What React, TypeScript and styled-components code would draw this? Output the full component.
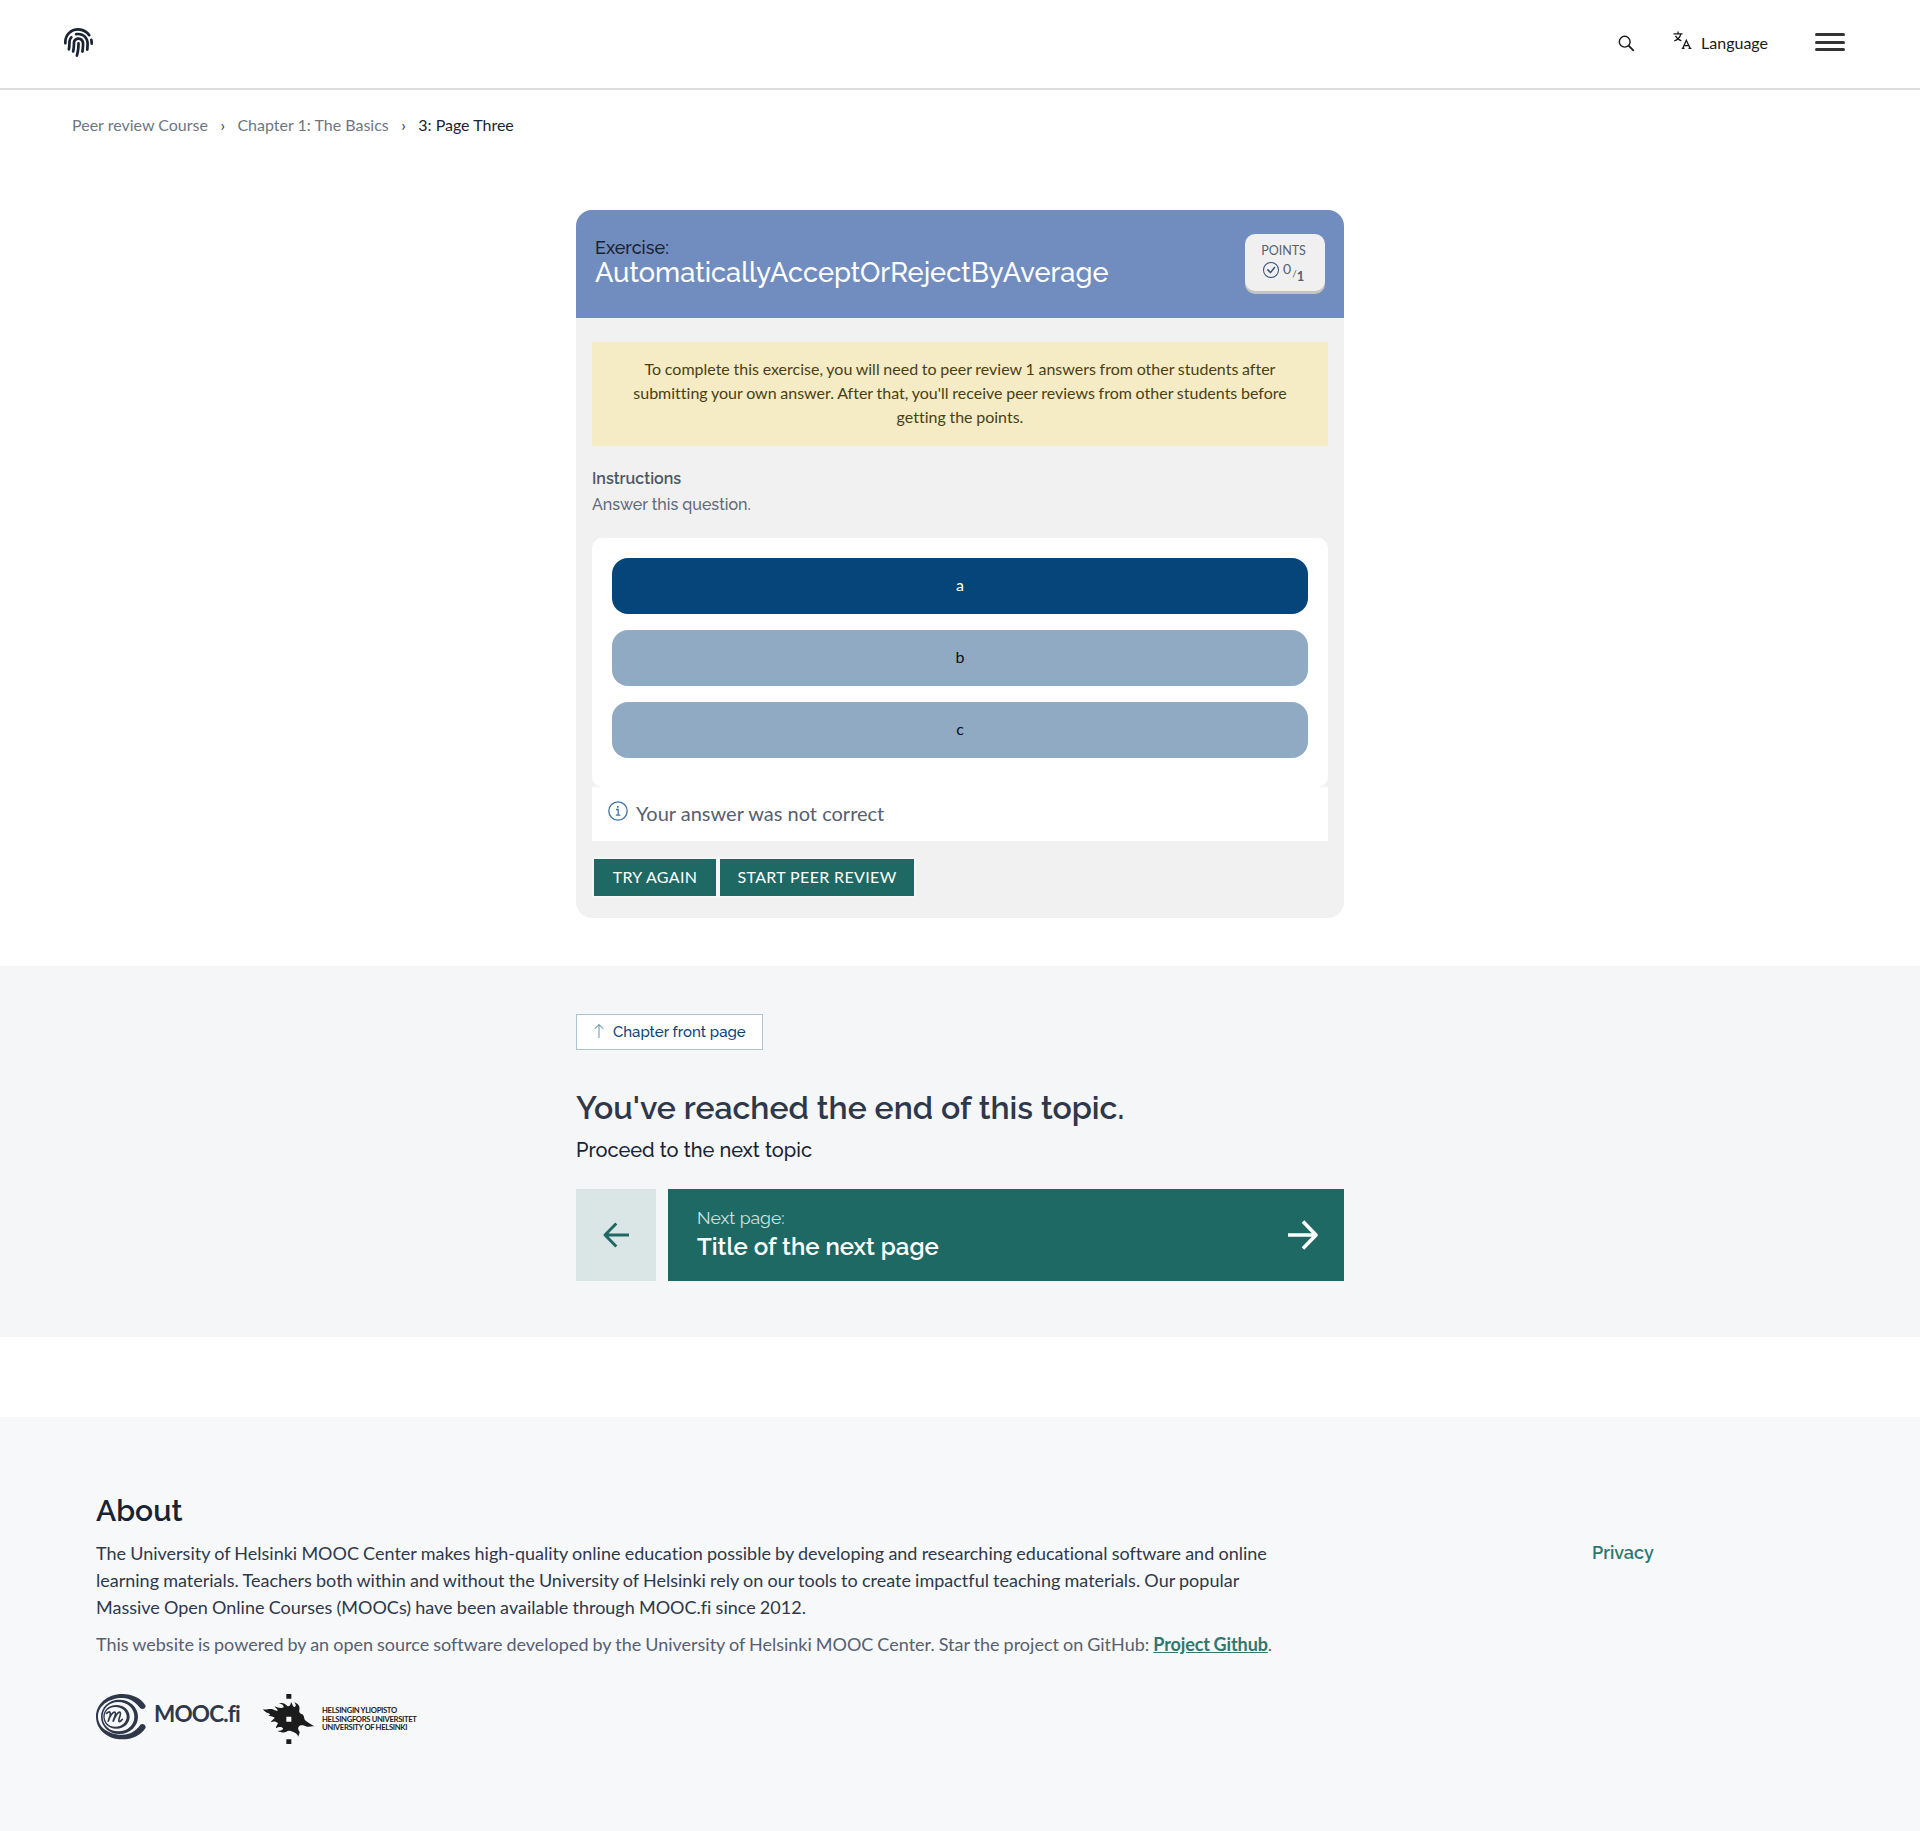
import React from "react";
import styled, { createGlobalStyle } from "styled-components";
import { FaFingerprint } from "react-icons/fa";
import { BsArrowUp, BsCheckCircle } from "react-icons/bs";

const heading = `Raleway, Lato, sans-serif`;
const body = `Lato, sans-serif`;

const Global = createGlobalStyle`
  *, *::before, *::after { box-sizing: border-box; }
  body { margin: 0; background: #fff; font-family: ${body}; font-size: 16px; line-height: 24px; color: #1a2333; font-variant-ligatures: none; }
  p, h1, h2, h3 { margin: 0; font-weight: 400; }
  button { font-family: inherit; border: 0; cursor: pointer; }
  a { text-decoration: none; color: inherit; }
  svg { display: block; flex: none; }
`;

const Header = styled.header`
  height: 90px;
  border-bottom: 2px solid #dcdcdc;
  padding: 27px 75px 0 64px;
  display: flex;
  justify-content: space-between;
  align-items: flex-start;
`;
const HomeLink = styled.a`
  padding-top: 1px;
`;
const HeaderTools = styled.div`
  display: flex;
  align-items: flex-start;
`;
const SearchButton = styled.button`
  background: none;
  padding: 8px 0 0;
  margin-right: 38px;
`;
const LanguageButton = styled.button`
  display: flex;
  align-items: flex-start;
  background: none;
  padding: 4px 0 0;
  color: #1a1a1a;
  margin-right: 47px;
`;
const LanguageLabel = styled.span`
  font-size: 16px;
  line-height: 24px;
  margin-left: 9px;
`;
const MenuButton = styled.button`
  background: none;
  padding: 6px 0 0;
  display: flex;
  flex-direction: column;
  gap: 4.5px;
`;
const Bar = styled.span`
  width: 30px;
  height: 3px;
  border-radius: 2px;
  background: #333;
`;

const Crumbs = styled.nav`
  display: flex;
  padding: 23px 72px 0;
  height: 120px;
  color: #6b7280;
`;
const Crumb = styled.span<{ $current?: boolean }>`
  color: ${(p) => (p.$current ? "#1a2333" : "#6f7681")};
`;
const Separator = styled.span`
  width: 29.5px;
  text-align: center;
  color: #333;
`;

const Exercise = styled.section`
  width: 768px;
  height: 708px;
  margin: 0 auto 48px;
  background: #f1f1f1;
  border-radius: 16px;
  overflow: hidden;
`;
const ExerciseHeader = styled.div`
  height: 108px;
  background: #718dbf;
  padding: 24px 19px 0;
  display: flex;
  justify-content: space-between;
  align-items: flex-start;
`;
const ExerciseTitle = styled.h2`
  font-family: ${heading};
  color: #fff;
  font-size: 27.2px;
  line-height: 28px;
  font-weight: 500;
  padding-top: 3px;
`;
const ExerciseLabel = styled.span`
  display: block;
  color: #1a2333;
  font-size: 18px;
  line-height: 21px;
`;
const Points = styled.div`
  width: 80px;
  height: 57px;
  border-radius: 10px;
  background: #f0f0f0;
  box-shadow: 0 3px 0 #c4c4c4;
  padding-top: 10px;
  color: #57606f;
`;
const PointsLabel = styled.div`
  font-size: 12.5px;
  line-height: 14px;
  text-align: center;
  padding-right: 3px;
`;
const PointsRow = styled.div`
  display: flex;
  padding: 4px 0 0 18px;
  color: #2f4b7c;
`;
const Fraction = styled.span`
  display: flex;
  margin-left: 4px;
  line-height: 14px;
  font-size: 14px;
  color: #57606f;
`;
const Slash = styled.span`
  font-size: 10px;
  padding-top: 4px;
  margin-left: 1px;
`;
const MaxPoints = styled.span`
  font-weight: 700;
  font-size: 13px;
  padding-top: 7px;
`;

const ExerciseBody = styled.div`
  padding: 24px 16px 0;
`;
const Notice = styled.div`
  background: #f5ecc5;
  color: #493f14;
  padding: 15px 32px 17px;
  text-align: center;
  word-spacing: -0.4px;
`;
const Instructions = styled.div`
  font-family: ${heading};
  padding: 20px 0 14px;
  line-height: 26px;
  height: 92px;
  color: #5e6b7a;
`;
const InstructionsTitle = styled.h3`
  font-size: 16px;
  font-weight: 600;
  color: #4c5868;
`;
const InstructionsText = styled.p`
  font-weight: 500;
`;
const Options = styled.div`
  background: #fff;
  border-radius: 10px;
  height: 249px;
  padding: 20px;
  display: flex;
  flex-direction: column;
  gap: 16px;
`;
const Option = styled.button<{ $selected?: boolean }>`
  height: 56px;
  border-radius: 16px;
  font-size: 16px;
  padding-bottom: 4px;
  color: ${(p) => (p.$selected ? "#fff" : "#0b0f16")};
  background: ${(p) => (p.$selected ? "#06457a" : "#91aac4")};
`;
const Feedback = styled.div`
  background: #fff;
  height: 54px;
  padding: 13px 16px 0;
  display: flex;
  color: #57606f;
  font-size: 20px;
  line-height: 26px;
  gap: 8px;
  svg {
    margin-top: 1px;
  }
`;
const Actions = styled.div`
  display: flex;
  padding-top: 16px;
`;
const Action = styled.button<{ $width: number }>`
  width: ${(p) => p.$width}px;
  height: 41px;
  border: 2px solid #f5f6f7;
  background: #1f6964;
  color: #fff;
  padding: 0 0 2px;
  font-size: 16px;
  letter-spacing: 0.35px;
  text-transform: uppercase;
`;

const EndSection = styled.section`
  background: #f4f6f8;
  height: 371px;
  padding-top: 48px;
`;
const EndInner = styled.div`
  width: 768px;
  margin: 0 auto;
  font-family: ${heading};
  display: flex;
  flex-direction: column;
  align-items: flex-start;
`;
const ChapterLink = styled.a`
  display: flex;
  height: 36px;
  width: 187px;
  border: 1px solid #aec3d8;
  background: #fff;
  color: #06457a;
  padding: 8px 0 0 14px;
  font-size: 15px;
  font-weight: 500;
  line-height: 18px;
  gap: 6px;
`;
const EndTitle = styled.h2`
  font-size: 32px;
  line-height: 38px;
  font-weight: 600;
  color: #2e3849;
  padding-top: 39px;
`;
const EndText = styled.p`
  font-size: 20px;
  line-height: 26px;
  font-weight: 500;
  color: #1a2333;
  padding-top: 10px;
`;
const Pager = styled.div`
  display: grid;
  grid-template-columns: 80px 676px;
  gap: 12px;
  height: 92px;
  margin-top: 26px;
`;
const Previous = styled.a`
  background: #dae6e5;
  display: flex;
  align-items: center;
  justify-content: center;
`;
const Next = styled.a`
  background: #1f6964;
  color: #fff;
  display: flex;
  align-items: center;
  justify-content: space-between;
  padding: 0 25px 0 29px;
`;
const NextHint = styled.div`
  font-size: 17.6px;
  line-height: 22px;
  padding-bottom: 2px;
  color: #d2e1e0;
`;
const NextTitle = styled.div`
  font-size: 24px;
  line-height: 32px;
  font-weight: 600;
`;

const Footer = styled.footer`
  margin-top: 80px;
  height: 414px;
  background: #f7f8fa;
  padding: 76px 96px 0;
  display: grid;
  grid-template-columns: 1200px 1fr;
  column-gap: 296px;
`;
const About = styled.h2`
  font-family: ${heading};
  font-size: 30px;
  line-height: 36px;
  font-weight: 600;
  color: #1a2333;
`;
const FooterText = styled.p<{ $muted?: boolean }>`
  font-size: 18px;
  line-height: 27px;
  color: ${(p) => (p.$muted ? "#57606f" : "#2e3849")};
  padding-top: ${(p) => (p.$muted ? "10px" : "11px")};
  word-spacing: ${(p) => (p.$muted ? "-0.6px" : "-0.42px")};
`;
const GithubLink = styled.a`
  color: #2f776f;
  font-weight: 700;
  letter-spacing: -0.1px;
  text-decoration: underline;
`;
const Privacy = styled.a`
  font-family: ${heading};
  font-size: 18px;
  line-height: 27px;
  font-weight: 600;
  color: #2f776f;
  padding-top: 46px;
`;
const Logos = styled.div`
  display: flex;
  padding-top: 36px;
`;
const MoocName = styled.span`
  font-size: 22.5px;
  line-height: 30px;
  font-weight: 700;
  letter-spacing: -0.8px;
  color: #2e3849;
  width: 117px;
  padding: 5px 0 0 8px;
`;
const HelsinkiName = styled.div`
  font-size: 7.7px;
  line-height: 8.5px;
  font-weight: 700;
  letter-spacing: -0.35px;
  color: #1c1c1c;
  white-space: nowrap;
  padding: 12px 0 0 7px;
`;

const SearchIcon = () => (
  <svg width="17" height="17" viewBox="0 0 17 17" fill="none" stroke="#1a1a1a" strokeWidth="1.4">
    <circle cx="6.7" cy="6.7" r="5.4" />
    <path d="M10.6 10.6 15.8 15.8" strokeWidth="1.8" />
  </svg>
);

const TranslateIcon = () => (
  <svg width="19" height="19" viewBox="0 0 19 19" fill="none" stroke="#1a1a1a" strokeWidth="1.3">
    <path d="M.5 2.8h9M5 .5v2.3M7.8 3C7 6.4 4.600 8.700 1.200 10M2.500 4.800C3.600 7.200 5.600 8.900 8.300 9.800" />
    <path d="M9.800 17.300 13.300 9.300 17.100 17.300M11 14.600h5M8.800 17.400h2.700M15.500 17.400h2.900" />
  </svg>
);

const InfoIcon = () => (
  <svg width="20" height="20" viewBox="0 0 20 20" fill="none" stroke="#3c75a8" strokeWidth="1.3">
    <circle cx="10" cy="10" r="9.200" />
    <path d="M8 8.500h2.200V14M7.800 14.100h4.600" />
    <path d="M9 5.900h1.600" strokeWidth="1.700" />
  </svg>
);

const ArrowLeft = () => (
  <svg width="28" height="28" viewBox="0 0 28 28" fill="none" stroke="#1f6964" strokeWidth="3">
    <path d="M27 14H4M14.300 2.500 3 14 14.300 25.500" strokeLinejoin="round" />
  </svg>
);

const ArrowRight = () => (
  <svg width="32" height="32" viewBox="0 0 32 32" fill="none" stroke="#fff" strokeWidth="3.6">
    <path d="M1 16H28M16 2.500 29 16 16 29.500" strokeLinejoin="round" />
  </svg>
);

const MoocMark = () => (
  <svg width="50" height="46" viewBox="0 0 150 138">
    <g fill="#2e3849" fillRule="evenodd">
      <path d="M149 35C135 12 108 0 79 0 34 0 0 30 0 68s34 68 79 68c29 0 56-12 70-35 1-8-9-14-16-9-12 18-31 30-54 30C38 122 6 100 6 68S38 12 79 12c23 0 41 13 54 31 7 5 16 0 16-8Z" />
      <path d="M70 17c32 0 56 23 56 51s-24 52-56 52-55-24-55-52 23-51 55-51Zm-3 7c-28 0-47 20-47 44s19 44 47 44 48-20 48-44-20-44-48-44Z" />
      <path d="M61 33c24 0 40 16 40 35s-16 36-40 36-39-17-39-36 15-35 39-35Zm-3 6c-20 0-32 13-32 29s12 30 32 30 34-14 34-30-14-29-34-29Z" />
    </g>
    <path
      d="M32 58c9-9 13-3 10 8l-6 17c5-16 15-31 21-28 5 4-4 19-6 28 7-17 15-31 21-28 6 5-9 25-2 28 3 0 7-4 9-7"
      fill="none"
      stroke="#2e3849"
      strokeWidth="5"
      strokeLinecap="round"
    />
  </svg>
);

const HelsinkiMark = () => (
  <svg width="52" height="50" viewBox="0 0 156 150" fill="#1c1c1c">
    <path d="M70 0h15v14H70zM70 136h15v14H70z" />
    <path
      fillRule="evenodd"
      d="M0 45C8 50 16 43 27 45 33 46 38 52 44 50 45 46 38 44 35 37 46 42 56 44 62 40 63 34 57 30 48 28 60 24 68 30 73 36 77 39 83 35 84 24 90 32 89 39 95 39 101 36 98 29 93 25 106 28 112 38 109 49 107 56 113 60 120 62 125 68 122 75 128 80 136 87 146 91 156 98 147 95 140 100 131 98 123 94 113 91 107 98 103 105 108 110 110 114 110 119 107 123 106 128 103 119 97 115 89 113 80 110 76 109 70 113 64 117 56 116 44 111 54 111 61 108 60 103 55 97 46 99 39 103 38 97 43 93 45 87 38 81 31 81 23 85 25 78 34 76 35 71 28 66 20 67 14 66 23 64 23 61 16 58 8 55 3 51 0 45ZM70 68v15h15V68Z"
    />
  </svg>
);

export default function App() {
  return (
    <>
      <Global />
      <Header>
        <HomeLink aria-label="Home">
          <FaFingerprint size={29} color="#1a2333" />
        </HomeLink>
        <HeaderTools>
          <SearchButton aria-label="Search">
            <SearchIcon />
          </SearchButton>
          <LanguageButton>
            <TranslateIcon />
            <LanguageLabel>Language</LanguageLabel>
          </LanguageButton>
          <MenuButton aria-label="Menu">
            <Bar />
            <Bar />
            <Bar />
          </MenuButton>
        </HeaderTools>
      </Header>
      <Crumbs>
        <Crumb>Peer review Course</Crumb>
        <Separator>›</Separator>
        <Crumb>Chapter 1: The Basics</Crumb>
        <Separator>›</Separator>
        <Crumb $current>3: Page Three</Crumb>
      </Crumbs>
      <Exercise>
        <ExerciseHeader>
          <ExerciseTitle>
            <ExerciseLabel>Exercise:</ExerciseLabel>
            AutomaticallyAcceptOrRejectByAverage
          </ExerciseTitle>
          <Points>
            <PointsLabel>POINTS</PointsLabel>
            <PointsRow>
              <BsCheckCircle size={16} />
              <Fraction>
                0<Slash>/</Slash>
                <MaxPoints>1</MaxPoints>
              </Fraction>
            </PointsRow>
          </Points>
        </ExerciseHeader>
        <ExerciseBody>
          <Notice>
            To complete this exercise, you will need to peer review 1 answers from other students after submitting
            your own answer. After that, you'll receive peer reviews from other students before getting the points.
          </Notice>
          <Instructions>
            <InstructionsTitle>Instructions</InstructionsTitle>
            <InstructionsText>Answer this question.</InstructionsText>
          </Instructions>
          <Options>
            <Option $selected>a</Option>
            <Option>b</Option>
            <Option>c</Option>
          </Options>
          <Feedback>
            <InfoIcon />
            <p>Your answer was not correct</p>
          </Feedback>
          <Actions>
            <Action $width={126}>Try again</Action>
            <Action $width={198}>Start peer review</Action>
          </Actions>
        </ExerciseBody>
      </Exercise>
      <EndSection>
        <EndInner>
          <ChapterLink>
            <BsArrowUp size={16} color="#6b93b8" />
            Chapter front page
          </ChapterLink>
          <EndTitle>You've reached the end of this topic.</EndTitle>
          <EndText>Proceed to the next topic</EndText>
          <Pager>
            <Previous aria-label="Previous page">
              <ArrowLeft />
            </Previous>
            <Next>
              <div>
                <NextHint>Next page:</NextHint>
                <NextTitle>Title of the next page</NextTitle>
              </div>
              <ArrowRight />
            </Next>
          </Pager>
        </EndInner>
      </EndSection>
      <Footer>
        <div>
          <About>About</About>
          <FooterText>
            The University of Helsinki MOOC Center makes high-quality online education possible by developing and
            researching educational software and online learning materials. Teachers both within and without the
            University of Helsinki rely on our tools to create impactful teaching materials. Our popular Massive Open
            Online Courses (MOOCs) have been available through MOOC.fi since 2012.
          </FooterText>
          <FooterText $muted>
            This website is powered by an open source software developed by the University of Helsinki MOOC Center.
            Star the project on GitHub: <GithubLink>Project Github</GithubLink>.
          </FooterText>
          <Logos>
            <MoocMark />
            <MoocName>MOOC.fi</MoocName>
            <HelsinkiMark />
            <HelsinkiName>
              HELSINGIN YLIOPISTO
              <br />
              HELSINGFORS UNIVERSITET
              <br />
              UNIVERSITY OF HELSINKI
            </HelsinkiName>
          </Logos>
        </div>
        <Privacy>Privacy</Privacy>
      </Footer>
    </>
  );
}
